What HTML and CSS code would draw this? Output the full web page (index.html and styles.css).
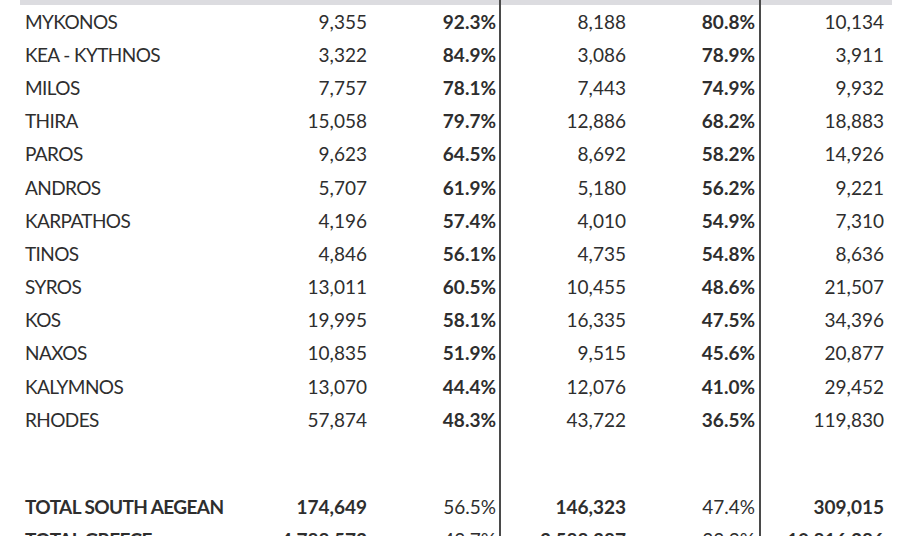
FILE: index.html
```html
<!DOCTYPE html>
<html>
<head>
<meta charset="utf-8">
<link rel="stylesheet" href="styles.css">
</head>
<body>
<table class="sheet">
  <colgroup>
    <col class="c-name"><col class="c-num"><col class="c-num"><col class="c-num3"><col class="c-num"><col class="c-num5">
  </colgroup>
  <tr class="head"><td></td><td></td><td></td><td class="sep"></td><td></td><td class="sep"></td></tr>
  <tr><td class="name">MYKONOS</td><td>9,355</td><td class="b">92.3%</td><td class="sep">8,188</td><td class="b">80.8%</td><td class="sep">10,134</td></tr>
  <tr><td class="name">KEA - KYTHNOS</td><td>3,322</td><td class="b">84.9%</td><td class="sep">3,086</td><td class="b">78.9%</td><td class="sep">3,911</td></tr>
  <tr><td class="name">MILOS</td><td>7,757</td><td class="b">78.1%</td><td class="sep">7,443</td><td class="b">74.9%</td><td class="sep">9,932</td></tr>
  <tr><td class="name">THIRA</td><td>15,058</td><td class="b">79.7%</td><td class="sep">12,886</td><td class="b">68.2%</td><td class="sep">18,883</td></tr>
  <tr><td class="name">PAROS</td><td>9,623</td><td class="b">64.5%</td><td class="sep">8,692</td><td class="b">58.2%</td><td class="sep">14,926</td></tr>
  <tr><td class="name">ANDROS</td><td>5,707</td><td class="b">61.9%</td><td class="sep">5,180</td><td class="b">56.2%</td><td class="sep">9,221</td></tr>
  <tr><td class="name">KARPATHOS</td><td>4,196</td><td class="b">57.4%</td><td class="sep">4,010</td><td class="b">54.9%</td><td class="sep">7,310</td></tr>
  <tr><td class="name">TINOS</td><td>4,846</td><td class="b">56.1%</td><td class="sep">4,735</td><td class="b">54.8%</td><td class="sep">8,636</td></tr>
  <tr><td class="name">SYROS</td><td>13,011</td><td class="b">60.5%</td><td class="sep">10,455</td><td class="b">48.6%</td><td class="sep">21,507</td></tr>
  <tr><td class="name">KOS</td><td>19,995</td><td class="b">58.1%</td><td class="sep">16,335</td><td class="b">47.5%</td><td class="sep">34,396</td></tr>
  <tr><td class="name">NAXOS</td><td>10,835</td><td class="b">51.9%</td><td class="sep">9,515</td><td class="b">45.6%</td><td class="sep">20,877</td></tr>
  <tr><td class="name">KALYMNOS</td><td>13,070</td><td class="b">44.4%</td><td class="sep">12,076</td><td class="b">41.0%</td><td class="sep">29,452</td></tr>
  <tr><td class="name">RHODES</td><td>57,874</td><td class="b">48.3%</td><td class="sep">43,722</td><td class="b">36.5%</td><td class="sep">119,830</td></tr>
  <tr class="spacer"><td></td><td></td><td></td><td class="sep"></td><td></td><td class="sep"></td></tr>
  <tr class="total"><td class="name">TOTAL SOUTH AEGEAN</td><td>174,649</td><td class="n">56.5%</td><td class="sep">146,323</td><td class="n">47.4%</td><td class="sep">309,015</td></tr>
  <tr class="total"><td class="name">TOTAL GREECE</td><td>4,788,572</td><td class="n">43.7%</td><td class="sep">3,588,387</td><td class="n">33.2%</td><td class="sep">10,816,286</td></tr>
</table>
</body>
</html>
```

FILE: styles.css
```css
html, body {
  margin: 0;
  padding: 0;
  background: #ffffff;
  overflow: hidden;
}

.sheet {
  margin-left: 20px;
  border-collapse: collapse;
  table-layout: fixed;
  width: 872px;
  font-family: Lato, "Open Sans", sans-serif;
  font-size: 19px;
  color: #2e2e2e;
}

.c-name { width: 220px; }
.c-num { width: 130px; }
.c-num3 { width: 130px; }
.c-num5 { width: 132px; }

.sheet td {
  height: 33.2px;
  padding: 0 3px 0 0;
  text-align: right;
  vertical-align: middle;
  white-space: nowrap;
  line-height: 20px;
}

.sheet td.name {
  text-align: left;
  padding-left: 5px;
  letter-spacing: -0.6px;
}

.sheet td.sep {
  border-left: 2px solid #4a4a4a;
}

.sheet tr td:nth-child(4),
.sheet tr td:nth-child(5) {
  padding-right: 4px;
}

.sheet tr td:nth-child(6) {
  padding-right: 8px;
}

.sheet tr.head td {
  height: 5px;
  background: #dcdce0;
}

.sheet tr.spacer td {
  height: 54px;
}

.b { font-weight: 700; }

.total td { font-weight: 700; }
.total td.n { font-weight: 400; }
```
